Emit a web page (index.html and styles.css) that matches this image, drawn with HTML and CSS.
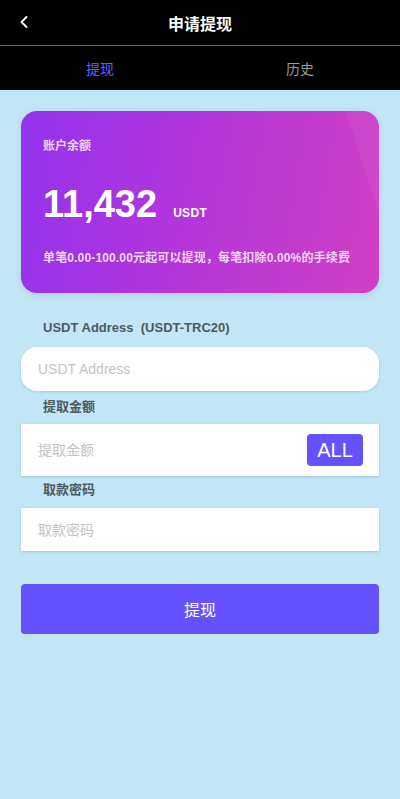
FILE: index.html
```html
<!DOCTYPE html>
<html lang="zh-CN">
<head>
    <meta charset="utf-8">
    <meta name="viewport" content="width=device-width, initial-scale=1">
    <title>申请提现</title>
    <link rel="stylesheet" href="styles.css">
</head>
<body>
    <!-- 顶部导航 -->
    <header class="top-bar">
        <a class="back-btn" href="#">
            <svg width="14" height="14" viewBox="0 0 14 14"><path d="M9.5 2 L4.5 7 L9.5 12" fill="none" stroke="#fff" stroke-width="1.8" stroke-linecap="round" stroke-linejoin="round"/></svg>
        </a>
        <h1 class="top-title">申请提现</h1>
    </header>

    <!-- 标签切换 -->
    <nav class="tabs">
        <a class="tab active" href="#">提现</a>
        <a class="tab" href="#">历史</a>
    </nav>

    <main class="page">
        <!-- 余额卡片 -->
        <section class="balance-card">
            <div class="balance-label">账户余额</div>
            <div class="balance-row">
                <span class="balance-num">11,432</span>
                <span class="balance-unit">USDT</span>
            </div>
            <div class="balance-tip">单笔0.00-100.00元起可以提现，每笔扣除0.00%的手续费</div>
        </section>

        <!-- 表单 -->
        <div class="field-label label-address">USDT Address&nbsp;&nbsp;(USDT-TRC20)</div>
        <div class="field field-round">
            <input type="text" placeholder="USDT Address">
        </div>

        <div class="field-label label-amount">提取金额</div>
        <div class="field field-amount">
            <input type="text" placeholder="提取金额">
            <button class="all-btn">ALL</button>
        </div>

        <div class="field-label label-pwd">取款密码</div>
        <div class="field field-pwd">
            <input type="password" placeholder="取款密码">
        </div>

        <button class="submit-btn">提现</button>
    </main>
</body>
</html>
```

FILE: styles.css
```css
* {
    box-sizing: border-box;
}

html, body {
    margin: 0;
    padding: 0;
}

body {
    background: #c1e6f5;
    font-family: "Liberation Sans", Arial, "Noto Sans CJK SC", sans-serif;
    min-height: 799px;
}

/* 顶部导航 */
.top-bar {
    height: 46px;
    background: #000;
    border-bottom: 1px solid #5a5a5a;
    display: flex;
    align-items: center;
    justify-content: center;
    position: relative;
}

.back-btn {
    position: absolute;
    left: 17px;
    top: 15px;
    display: flex;
}

.top-title {
    margin: 0;
    color: #fff;
    font-size: 16px;
    font-weight: bold;
}

/* 标签 */
.tabs {
    height: 44px;
    background: #000;
    display: flex;
}

.tab {
    flex: 1;
    display: flex;
    align-items: center;
    justify-content: center;
    font-size: 14px;
    color: #9a9a9a;
    text-decoration: none;
}

.tab.active {
    color: #6b5cff;
}

.page {
    padding: 21px 21px 40px;
}

/* 余额卡片 */
.balance-card {
    height: 182px;
    border-radius: 16px;
    padding: 28px 22px 0;
    color: #fff;
    background:
        linear-gradient(72deg, transparent 92%, rgba(255,255,255,0.05) 92%),
        linear-gradient(100deg, #9332ee 0%, #b236dc 45%, #d03fc3 100%);
    box-shadow: 0 2px 6px rgba(120, 60, 200, 0.15);
}

.balance-label {
    font-size: 12px;
    line-height: 14px;
    font-weight: bold;
    color: #ecd7f7;
}

.balance-row {
    display: flex;
    align-items: baseline;
    margin-top: 29px;
    height: 44px;
}

.balance-num {
    font-size: 38px;
    font-weight: bold;
    line-height: 44px;
}

.balance-unit {
    font-size: 12px;
    font-weight: bold;
    margin-left: 16px;
    letter-spacing: 0.3px;
}

.balance-tip {
    margin-top: 25px;
    font-size: 12px;
    line-height: 14px;
    font-weight: bold;
    letter-spacing: 0.15px;
    color: #f0d6f2;
}

/* 表单 */
.field-label {
    font-size: 13px;
    line-height: 16px;
    font-weight: bold;
    color: #4d5a62;
    padding-left: 22px;
}

.label-address {
    margin: 27px 0 11px;
}

.label-amount {
    margin: 8px 0 9px;
}

.label-pwd {
    margin: 6px 0 10px;
}

.field {
    background: #fff;
    display: flex;
    align-items: center;
    box-shadow: 0 1px 3px rgba(0, 0, 0, 0.12);
}

.field input {
    flex: 1;
    min-width: 0;
    border: none;
    outline: none;
    background: transparent;
    font-size: 14px;
    font-family: inherit;
    color: #333;
    padding: 0 0 0 17px;
}

.field input::placeholder {
    color: #c4c4c4;
}

.field-round {
    height: 44px;
    border-radius: 16px;
}

.field-amount {
    height: 52px;
    padding-right: 16px;
}

.field-pwd {
    height: 43px;
}

.all-btn {
    width: 56px;
    height: 32px;
    border: none;
    border-radius: 4px;
    background: #6552ff;
    color: #fff;
    font-size: 20px;
    font-family: inherit;
    padding: 0;
}

.submit-btn {
    display: block;
    width: 100%;
    height: 50px;
    margin-top: 33px;
    border: none;
    border-radius: 4px;
    background: #6552ff;
    color: #fff;
    font-size: 16px;
    font-family: inherit;
}
```
